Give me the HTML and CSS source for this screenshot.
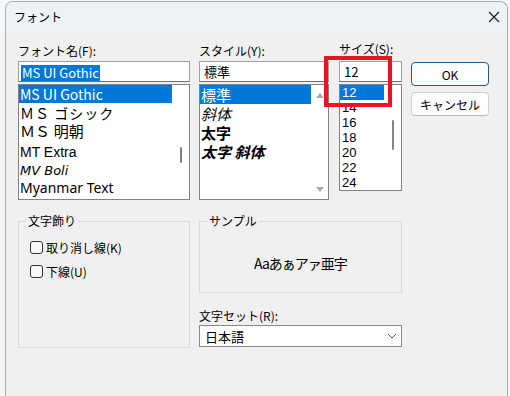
FILE: index.html
```html
<!DOCTYPE html>
<html lang="ja">
<head>
    <meta charset="UTF-8">
    <meta name="viewport" content="width=device-width, initial-scale=1.0">
    <title>フォント</title>
    <link rel="stylesheet" href="styles.css">
</head>
<body>
    <div class="dialog">
        <div class="titlebar">
            <span class="title">フォント</span>
            <svg class="close" width="12" height="12" viewBox="0 0 12 12">
                <path d="M1 1L11 11M11 1L1 11" stroke="#1a1a1a" stroke-width="1.1" fill="none"/>
            </svg>
        </div>
        <div class="content">
            <div class="top-row">
                <div class="field field-name">
                    <span class="label">フォント名(F):</span>
                    <div class="input"><span class="selected-text">MS UI Gothic</span></div>
                    <div class="listbox">
                        <ul class="items">
                            <li class="item item-sel f-uigothic">MS UI Gothic</li>
                            <li class="item f-gothic">ＭＳ ゴシック</li>
                            <li class="item f-mincho">ＭＳ 明朝</li>
                            <li class="item f-mtextra">MT Extra</li>
                            <li class="item f-mvboli">MV Boli</li>
                            <li class="item f-myanmar">Myanmar Text</li>
                        </ul>
                        <div class="scrollbar scroll-name"><span class="thumb"></span></div>
                    </div>
                </div>

                <div class="field field-style">
                    <span class="label">スタイル(Y):</span>
                    <div class="input input-style">標準</div>
                    <div class="listbox">
                        <ul class="items">
                            <li class="item style-item item-sel">標準</li>
                            <li class="item style-item s-italic">斜体</li>
                            <li class="item style-item s-bold">太字</li>
                            <li class="item style-item s-bold s-italic">太字 斜体</li>
                        </ul>
                        <div class="scrollbar scroll-style">
                            <span class="arrow arrow-up"></span>
                            <span class="arrow arrow-down"></span>
                        </div>
                    </div>
                </div>

                <div class="field field-size">
                    <span class="label label-size">サイズ(S):</span>
                    <div class="input input-size">12</div>
                    <div class="listbox listbox-size">
                        <ul class="items">
                            <li class="item size-item item-sel">12</li>
                            <li class="item size-item">14</li>
                            <li class="item size-item">16</li>
                            <li class="item size-item">18</li>
                            <li class="item size-item">20</li>
                            <li class="item size-item">22</li>
                            <li class="item size-item">24</li>
                        </ul>
                        <div class="scrollbar scroll-size"><span class="thumb thumb-size"></span></div>
                    </div>
                    <div class="marker"></div>
                </div>

                <div class="buttons">
                    <button class="btn btn-default">OK</button>
                    <button class="btn">キャンセル</button>
                </div>
            </div>

            <div class="bottom-row">
                <fieldset class="group group-effects">
                    <legend>文字飾り</legend>
                    <div class="check"><span class="box"></span>取り消し線(K)</div>
                    <div class="check"><span class="box"></span>下線(U)</div>
                </fieldset>

                <div class="right-col">
                    <fieldset class="group group-sample">
                        <legend>サンプル</legend>
                        <div class="sample-text">Aaあぁアァ亜宇</div>
                    </fieldset>
                    <span class="label label-charset">文字セット(R):</span>
                    <div class="select">
                        <span>日本語</span>
                        <svg width="10" height="6" viewBox="0 0 10 6">
                            <path d="M1 1L5 5L9 1" stroke="#555" stroke-width="1" fill="none"/>
                        </svg>
                    </div>
                </div>
            </div>
        </div>
    </div>
</body>
</html>
```

FILE: styles.css
```css
body {
    margin: 0;
    background-color: #f5f6f8;
    font-family: "Noto Sans CJK JP", "Noto Sans", sans-serif;
    font-size: 12px;
    color: #000000;
}
.dialog {
    margin: 1px 2px 0 5px;
    height: 394px;
    background-color: #f0f0f0;
    border: 1px solid #a9a9a9;
    border-bottom: none;
    border-radius: 8px 8px 0 0;
    overflow: hidden;
}
.titlebar {
    height: 30px;
    background-color: #eef2f7;
    display: flex;
    align-items: center;
    justify-content: space-between;
    padding: 0 7px 0 8px;
}
.title {
    font-size: 12px;
    line-height: 16px;
}
.content {
    padding: 11px 0 0 12px;
}
.top-row {
    display: flex;
    align-items: flex-start;
}
.field-name {
    width: 172px;
}
.field-style {
    width: 130px;
    margin-left: 9px;
}
.field-size {
    width: 63px;
    margin-left: 10px;
    position: relative;
}
.label {
    display: block;
    height: 16px;
    line-height: 16px;
    margin-bottom: 2px;
    white-space: nowrap;
}
.label-size {
    margin-top: -2px;
    margin-bottom: 4px;
}
.input {
    height: 21px;
    box-sizing: border-box;
    border: 1px solid #a0a0a0;
    border-bottom-color: #6f6f6f;
    background-color: #ffffff;
    padding: 0 2px;
    line-height: 19px;
    font-size: 13px;
    white-space: nowrap;
    overflow: hidden;
}
.selected-text {
    display: inline-block;
    line-height: 16px;
    padding: 0 1px;
    background-color: #0078d7;
    color: #ffffff;
    vertical-align: middle;
}
.input-style,
.input-size {
    padding-left: 4px;
}
.listbox {
    margin-top: 2px;
    height: 116px;
    box-sizing: border-box;
    border: 1px solid #828282;
    background-color: #ffffff;
    display: flex;
    overflow: hidden;
}
.listbox-size {
    height: 107px;
}
.items {
    list-style: none;
    margin: 0;
    padding: 0;
    flex: 1;
    min-width: 0;
}
.item {
    white-space: nowrap;
    padding-left: 1px;
    font-size: 14px;
}
.item-sel {
    background-color: #0078d7;
    color: #ffffff;
}
.f-uigothic {
    height: 18px;
    line-height: 18px;
}
.f-gothic {
    height: 20px;
    line-height: 20px;
    letter-spacing: 1px;
}
.f-mincho {
    height: 19px;
    line-height: 19px;
    font-family: "Liberation Serif", "Noto Sans CJK JP", serif;
    font-size: 15px;
}
.f-mtextra {
    height: 20px;
    line-height: 20px;
    font-family: "Liberation Sans", sans-serif;
}
.f-mvboli {
    height: 18px;
    line-height: 18px;
    font-style: italic;
    font-family: "DejaVu Sans", sans-serif;
    font-size: 13px;
}
.f-myanmar {
    height: 16px;
    line-height: 16px;
    font-family: "Noto Sans", sans-serif;
}
.style-item {
    height: 19px;
    line-height: 19px;
    font-size: 15px;
}
.s-italic {
    font-style: italic;
}
.s-bold {
    font-weight: 700;
}
.size-item {
    height: 15px;
    line-height: 15px;
    font-family: "Liberation Sans", sans-serif;
    font-size: 13px;
    padding-left: 2px;
}
.scrollbar {
    width: 17px;
    flex-shrink: 0;
    display: flex;
    flex-direction: column;
    align-items: center;
}
.thumb {
    width: 2px;
    height: 16px;
    background-color: #858585;
    border-radius: 1px;
}
.scroll-name {
    padding-top: 62px;
}
.scroll-size {
    padding-top: 35px;
}
.thumb-size {
    height: 30px;
}
.scroll-style {
    justify-content: space-between;
    padding: 8px 0 7px;
    box-sizing: border-box;
}
.arrow {
    width: 0;
    height: 0;
    border-left: 4px solid transparent;
    border-right: 4px solid transparent;
}
.arrow-up {
    border-bottom: 5px solid #a8a8a8;
}
.arrow-down {
    border-top: 5px solid #a8a8a8;
}
.marker {
    position: absolute;
    left: -15px;
    top: 13px;
    width: 68px;
    height: 51px;
    box-sizing: border-box;
    border: 4px solid #e5161d;
}
.buttons {
    width: 78px;
    margin-left: 9px;
    padding-top: 19px;
}
.btn {
    display: block;
    width: 78px;
    height: 24px;
    box-sizing: border-box;
    margin-bottom: 6px;
    border: 1px solid #d0d0d0;
    border-bottom-color: #bdbdbd;
    border-radius: 4px;
    background-color: #fdfdfd;
    font-family: inherit;
    font-size: 12px;
    color: #000000;
    padding: 0;
}
.btn-default {
    border: 1px solid #1b5e93;
}
.bottom-row {
    display: grid;
    grid-template-columns: 172px 203px;
    column-gap: 9px;
    margin-top: 13px;
    align-items: start;
}
.group {
    margin: 0;
    border: 1px solid #d8d8d8;
    padding: 0 7px;
    min-width: 0;
    box-sizing: border-box;
}
.group legend {
    padding: 0 2px;
    line-height: 16px;
}
.group-effects {
    height: 135px;
    padding-top: 6px;
}
.check {
    display: flex;
    align-items: center;
    gap: 3px;
    height: 24px;
    margin-left: 4px;
}
.box {
    width: 13px;
    height: 13px;
    box-sizing: border-box;
    border: 1px solid #333333;
    border-radius: 3px;
    background-color: #f7f7f7;
}
.group-sample {
    height: 80px;
}
.sample-text {
    text-align: center;
    padding-top: 24px;
    line-height: 20px;
    font-size: 14px;
    letter-spacing: -1px;
}
.label-charset {
    margin-top: 15px;
    margin-bottom: 1px;
}
.select {
    height: 22px;
    box-sizing: border-box;
    border: 1px solid #8a8a8a;
    background-color: #ffffff;
    display: flex;
    align-items: center;
    justify-content: space-between;
    padding: 0 4px 0 5px;
    font-size: 13px;
}
```
